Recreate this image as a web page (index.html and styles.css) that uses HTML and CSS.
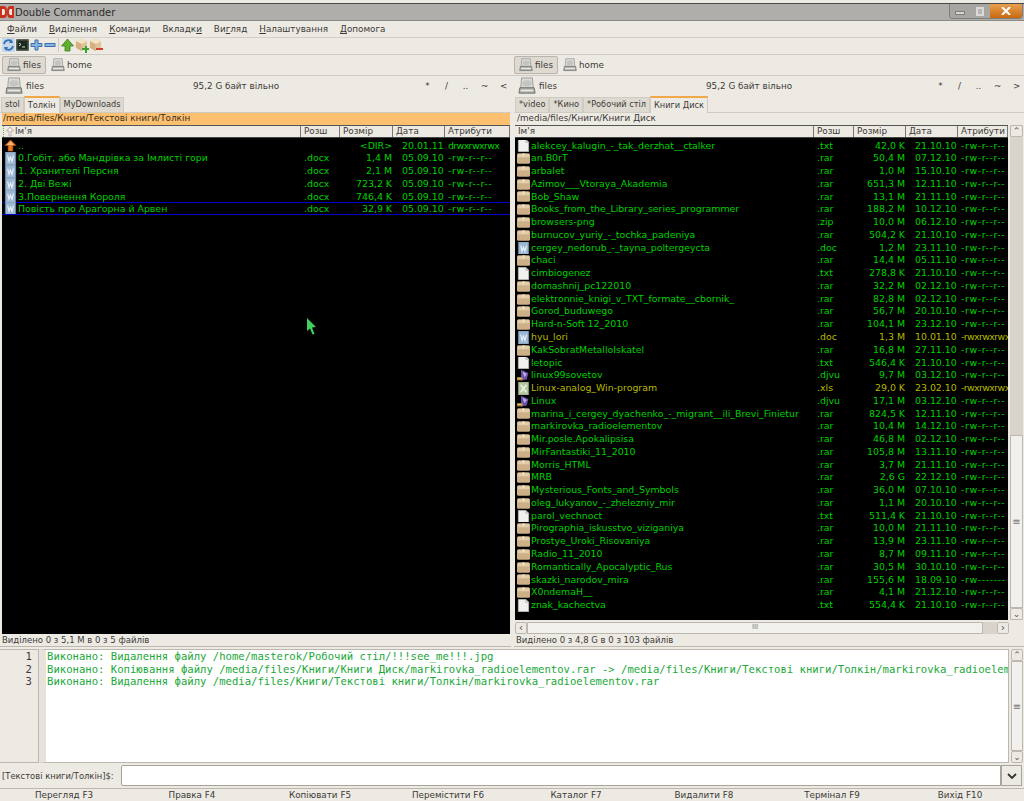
FILE: index.html

```html
<!DOCTYPE html>
<html>
<head>
    <title>Double Commander</title>
    <link rel="stylesheet" href="styles.css">
</head>
<body>
    <svg class="defs" width="0" height="0">
        <symbol id="drive" viewBox="0 0 20 20">
            <path d="M4 1h12l1 11H3z" fill="#d9d9d6" stroke="#9a9a96"/>
            <ellipse cx="10" cy="7" rx="5" ry="3.5" fill="#c4c4c0"/>
            <path d="M2 12h16l1 6H1z" fill="#a9a9a5" stroke="#70706c"/>
            <path d="M3 14h14v2H3z" fill="#e8e8e5"/>
        </symbol>
        <symbol id="box" viewBox="0 0 16 13">
            <path d="M0 2q0-2 2-2h12q2 0 2 2v9q0 2-2 2H2q-2 0-2-2z" fill="#cdb088"/>
            <path d="M1 1h14v4H1z" fill="#e2cca8"/>
            <path d="M7 0h2v4H7z" fill="#f0e4cc"/>
        </symbol>
        <symbol id="doc" viewBox="0 0 14 14">
            <path d="M1.500 0h11v14h-11z" fill="#9db8d2" stroke="#6e8cab" stroke-width=".8"/>
            <path d="M3 4l1.400 6 1.600-4.500L7.600 10 9.200 4" transform="translate(1)" fill="none" stroke="#eef4fa" stroke-width="1.200"/>
        </symbol>
        <symbol id="xls" viewBox="0 0 14 14">
            <path d="M1.500 0h11v14h-11z" fill="#b4c8a0" stroke="#84986c" stroke-width=".8"/>
            <path d="M4 3l6 8M10 3l-6 8" fill="none" stroke="#eef4e8" stroke-width="1.500"/>
        </symbol>
        <symbol id="txt" viewBox="0 0 12 14">
            <path d="M.5.500h8l3 3v10H.5z" fill="#f0f0ee" stroke="#b8b8b4"/>
            <path d="M8.500.500v3h3" fill="#d8d8d4" stroke="#b8b8b4"/>
        </symbol>
        <symbol id="djvu" viewBox="0 0 16 14">
            <path d="M5 0l9 4-2 8-7 1z" fill="#6a50a8"/>
            <path d="M7 2l5 3-3 4z" fill="#c0b0e8"/>
            <path d="M0 9h7v4H0z" fill="#b08840"/>
            <path d="M1 10h5v1H1z" fill="#e8d090"/>
        </symbol>
        <symbol id="up" viewBox="0 0 14 14">
            <path d="M7 1l6 6H9.500v6h-5V7H1z" fill="#e87820" stroke="#c05c10" stroke-width=".6"/>
            <path d="M7 2.500L3 6.500h8z" fill="#f8b880"/>
        </symbol>
        <symbol id="pack" viewBox="0 0 14 14">
            <path d="M7 0l6 3v7l-6 3.500L1 10V3z" fill="#e0c498"/>
            <path d="M7 0l6 3-6 3-6-3z" fill="#f4e4c4"/>
            <path d="M7 6v7.500L1 10V3z" fill="#d4b084"/>
        </symbol>
    </svg>

    <div class="title-bar">
        <svg class="app-logo" viewBox="0 0 14 14" width="14" height="14">
            <path d="M0 1h4q3 0 3 6t-3 6H0z" fill="#c83020"/>
            <path d="M14 1h-4q-3 0-3 6t3 6h4z" fill="#c83020"/>
            <path d="M2 4h1.500q1.500 0 1.500 3t-1.500 3H2zM12 4h-1.500Q9 4 9 7t1.500 3H12z" fill="#f4e8e0"/>
        </svg>
        <span class="title-text">Double Commander</span>
        <div class="win-btns">
            <span class="win-btn"><i class="min-mark"></i></span>
            <span class="win-btn"><i class="max-mark"></i></span>
            <span class="win-btn close"><svg viewBox="0 0 10 8" width="10" height="8"><path d="M1 0l8 8M9 0L1 8" stroke="#fff" stroke-width="2"/></svg></span>
        </div>
    </div>

    <div class="menu-bar">
        <span><u>Ф</u>айли</span>
        <span><u>В</u>иділення</span>
        <span><u>К</u>оманди</span>
        <span>Вкладк<u>и</u></span>
        <span>Ви<u>г</u>ляд</span>
        <span><u>Н</u>алаштування</span>
        <span><u>Д</u>опомога</span>
    </div>

    <div class="tool-bar">
        <svg width="13" height="14" viewBox="0 0 13 14"><rect width="13" height="14" rx="1" fill="#c4d8ee"/><path d="M2 6a4.500 4.500 0 0 1 8-2M11 8a4.500 4.500 0 0 1-8 2" fill="none" stroke="#3870b0" stroke-width="1.800"/><path d="M9 1l2 4-4 0zM4 13L2 9l4 0z" fill="#3870b0"/></svg>
        <svg width="13" height="14" viewBox="0 0 13 14"><rect y="1" width="13" height="12" rx="1" fill="#5c6458"/><rect x="1.500" y="2.500" width="10" height="9" fill="#1c2a20"/><path d="M3 5l2 1.500L3 8M6 9h3" stroke="#d0e0d0" fill="none"/></svg>
        <svg width="13" height="14" viewBox="0 0 13 14"><path d="M5 2h3v3.500h4v3H8V12H5V8.500H1v-3h4z" fill="#8ab4e0" stroke="#3c70b0"/></svg>
        <svg width="12" height="14" viewBox="0 0 12 14"><rect x="1" y="5.500" width="10" height="3" fill="#8ab4e0" stroke="#3c70b0"/></svg>
        <i class="tool-sep"></i>
        <svg width="13" height="14" viewBox="0 0 13 14"><path d="M6.500 1l6 7H9v5H4V8H.5z" fill="#60b030" stroke="#3c8018" stroke-width=".8"/></svg>
        <span class="pack-ico"><svg width="13" height="14"><use href="#pack"/></svg><b class="pack-mark add"></b></span>
        <span class="pack-ico"><svg width="13" height="14"><use href="#pack"/></svg><b class="pack-mark del"></b></span>
    </div>

    <div class="panels drive-row">
        <div class="drives">
            <span class="drive-btn active"><svg width="14" height="14"><use href="#drive"/></svg>files</span>
            <span class="drive-btn"><svg width="14" height="14"><use href="#drive"/></svg>home</span>
        </div>
        <div class="drives">
            <span class="drive-btn active"><svg width="14" height="14"><use href="#drive"/></svg>files</span>
            <span class="drive-btn"><svg width="14" height="14"><use href="#drive"/></svg>home</span>
        </div>
    </div>

    <div class="panels main-row">
        <section class="pane left-pane">
            <div class="pane-head">
                <svg width="18" height="18"><use href="#drive"/></svg>
                <span class="disk-name">files</span>
                <span class="free">95,2 G байт вільно</span>
                <span class="quick"><i>*</i><i>/</i><i>..</i><i>~</i><i>&lt;</i></span>
            </div>
            <div class="tabs">
                <span class="tab">stol</span>
                <span class="tab current">Толкін</span>
                <span class="tab">MyDownloads</span>
            </div>
            <div class="path active-path">/media/files/Книги/Текстові книги/Толкін</div>
            <div class="grid-wrap">
                <div class="table">
                    <div class="row head left-cols">
                        <span class="name sorted">Ім'я</span><span>Розш</span><span>Розмір</span><span>Дата</span><span>Атрибути</span>
                        <svg class="sort-mark" width="12" height="11" viewBox="0 0 12 11"><path d="M.5 0v11" stroke="#60b040" stroke-dasharray="1 1"/><path d="M7 1L3.500 5H6v5h2V5h2.500z" fill="#f4f2ee" stroke="#a8a49c" stroke-width=".8"/></svg>
                    </div>
                    <div class="rows">
                        <div class="row left-cols wide-attr"><span class="name"><svg><use href="#up"/></svg>..</span><span></span><span class="num">&lt;DIR&gt;</span><span>20.01.11</span><span>drwxrwxrwx</span></div>
                        <div class="row left-cols"><span class="name"><svg><use href="#doc"/></svg>0.Гобіт, або Мандрівка за Імлисті гори</span><span>.docx</span><span class="num">1,4 M</span><span>05.09.10</span><span>-rw-r--r--</span></div>
                        <div class="row left-cols"><span class="name"><svg><use href="#doc"/></svg>1. Хранителі Персня</span><span>.docx</span><span class="num">2,1 M</span><span>05.09.10</span><span>-rw-r--r--</span></div>
                        <div class="row left-cols"><span class="name"><svg><use href="#doc"/></svg>2. Дві Вежі</span><span>.docx</span><span class="num">723,2 K</span><span>05.09.10</span><span>-rw-r--r--</span></div>
                        <div class="row left-cols"><span class="name"><svg><use href="#doc"/></svg>3.Повернення Короля</span><span>.docx</span><span class="num">746,4 K</span><span>05.09.10</span><span>-rw-r--r--</span></div>
                        <div class="row left-cols cursor-row"><span class="name"><svg><use href="#doc"/></svg>Повість про Араґорна й Арвен</span><span>.docx</span><span class="num">32,9 K</span><span>05.09.10</span><span>-rw-r--r--</span></div>
                    </div>
                </div>
            </div>
            <div class="status">Виділено 0 з 5,1 M в 0 з 5 файлів</div>
        </section>

        <section class="pane right-pane">
            <div class="pane-head">
                <svg width="18" height="18"><use href="#drive"/></svg>
                <span class="disk-name">files</span>
                <span class="free">95,2 G байт вільно</span>
                <span class="quick"><i>*</i><i>/</i><i>..</i><i>~</i><i>&gt;</i></span>
            </div>
            <div class="tabs">
                <span class="tab">*video</span>
                <span class="tab">*Кино</span>
                <span class="tab">*Робочий стіл</span>
                <span class="tab current">Книги Диск</span>
            </div>
            <div class="path">/media/files/Книги/Книги Диск</div>
            <div class="grid-wrap">
                <div class="table">
                    <div class="row head right-cols"><span class="name">Ім'я</span><span>Розш</span><span>Розмір</span><span>Дата</span><span>Атрибути</span></div>
                    <div class="rows">
                        <div class="row right-cols"><span class="name"><svg><use href="#txt"/></svg>alekcey_kalugin_-_tak_derzhat__ctalker</span><span>.txt</span><span class="num">42,0 K</span><span>21.10.10</span><span>-rw-r--r--</span></div>
                        <div class="row right-cols"><span class="name"><svg><use href="#box"/></svg>an.B0rT</span><span>.rar</span><span class="num">50,4 M</span><span>07.12.10</span><span>-rw-r--r--</span></div>
                        <div class="row right-cols"><span class="name"><svg><use href="#box"/></svg>arbalet</span><span>.rar</span><span class="num">1,0 M</span><span>15.10.10</span><span>-rw-r--r--</span></div>
                        <div class="row right-cols"><span class="name"><svg><use href="#box"/></svg>Azimov___Vtoraya_Akademia</span><span>.rar</span><span class="num">651,3 M</span><span>12.11.10</span><span>-rw-r--r--</span></div>
                        <div class="row right-cols"><span class="name"><svg><use href="#box"/></svg>Bob_Shaw</span><span>.rar</span><span class="num">13,1 M</span><span>21.11.10</span><span>-rw-r--r--</span></div>
                        <div class="row right-cols"><span class="name"><svg><use href="#box"/></svg>Books_from_the_Library_series_programmer</span><span>.rar</span><span class="num">188,2 M</span><span>10.12.10</span><span>-rw-r--r--</span></div>
                        <div class="row right-cols"><span class="name"><svg><use href="#box"/></svg>browsers-png</span><span>.zip</span><span class="num">10,0 M</span><span>06.12.10</span><span>-rw-r--r--</span></div>
                        <div class="row right-cols"><span class="name"><svg><use href="#box"/></svg>burnucov_yuriy_-_tochka_padeniya</span><span>.rar</span><span class="num">504,2 K</span><span>21.10.10</span><span>-rw-r--r--</span></div>
                        <div class="row right-cols"><span class="name"><svg><use href="#doc"/></svg>cergey_nedorub_-_tayna_poltergeycta</span><span>.doc</span><span class="num">1,2 M</span><span>23.11.10</span><span>-rw-r--r--</span></div>
                        <div class="row right-cols"><span class="name"><svg><use href="#box"/></svg>chaci</span><span>.rar</span><span class="num">14,4 M</span><span>05.11.10</span><span>-rw-r--r--</span></div>
                        <div class="row right-cols"><span class="name"><svg><use href="#txt"/></svg>cimbiogenez</span><span>.txt</span><span class="num">278,8 K</span><span>21.10.10</span><span>-rw-r--r--</span></div>
                        <div class="row right-cols"><span class="name"><svg><use href="#box"/></svg>domashnij_pc122010</span><span>.rar</span><span class="num">32,2 M</span><span>02.12.10</span><span>-rw-r--r--</span></div>
                        <div class="row right-cols"><span class="name"><svg><use href="#box"/></svg>elektronnie_knigi_v_TXT_formate__cbornik_</span><span>.rar</span><span class="num">82,8 M</span><span>02.12.10</span><span>-rw-r--r--</span></div>
                        <div class="row right-cols"><span class="name"><svg><use href="#box"/></svg>Gorod_buduwego</span><span>.rar</span><span class="num">56,7 M</span><span>20.10.10</span><span>-rw-r--r--</span></div>
                        <div class="row right-cols"><span class="name"><svg><use href="#box"/></svg>Hard-n-Soft 12_2010</span><span>.rar</span><span class="num">104,1 M</span><span>23.12.10</span><span>-rw-r--r--</span></div>
                        <div class="row right-cols exec wide-attr"><span class="name"><svg><use href="#doc"/></svg>hyu_lori</span><span>.doc</span><span class="num">1,3 M</span><span>10.01.10</span><span>-rwxrwxrwx</span></div>
                        <div class="row right-cols"><span class="name"><svg><use href="#box"/></svg>KakSobratMetalloIskatel</span><span>.rar</span><span class="num">16,8 M</span><span>27.11.10</span><span>-rw-r--r--</span></div>
                        <div class="row right-cols"><span class="name"><svg><use href="#txt"/></svg>letopic</span><span>.txt</span><span class="num">546,4 K</span><span>21.10.10</span><span>-rw-r--r--</span></div>
                        <div class="row right-cols"><span class="name"><svg><use href="#djvu"/></svg>linux99sovetov</span><span>.djvu</span><span class="num">9,7 M</span><span>03.12.10</span><span>-rw-r--r--</span></div>
                        <div class="row right-cols exec wide-attr"><span class="name"><svg><use href="#xls"/></svg>Linux-analog_Win-program</span><span>.xls</span><span class="num">29,0 K</span><span>23.02.10</span><span>-rwxrwxrwx</span></div>
                        <div class="row right-cols"><span class="name"><svg><use href="#djvu"/></svg>Linux</span><span>.djvu</span><span class="num">17,1 M</span><span>03.12.10</span><span>-rw-r--r--</span></div>
                        <div class="row right-cols"><span class="name"><svg><use href="#box"/></svg>marina_i_cergey_dyachenko_-_migrant__ili_Brevi_Finietur</span><span>.rar</span><span class="num">824,5 K</span><span>12.11.10</span><span>-rw-r--r--</span></div>
                        <div class="row right-cols"><span class="name"><svg><use href="#box"/></svg>markirovka_radioelementov</span><span>.rar</span><span class="num">10,4 M</span><span>14.12.10</span><span>-rw-r--r--</span></div>
                        <div class="row right-cols"><span class="name"><svg><use href="#box"/></svg>Mir.posle.Apokalipsisa</span><span>.rar</span><span class="num">46,8 M</span><span>02.12.10</span><span>-rw-r--r--</span></div>
                        <div class="row right-cols"><span class="name"><svg><use href="#box"/></svg>MirFantastiki_11_2010</span><span>.rar</span><span class="num">105,8 M</span><span>13.11.10</span><span>-rw-r--r--</span></div>
                        <div class="row right-cols"><span class="name"><svg><use href="#box"/></svg>Morris_HTML</span><span>.rar</span><span class="num">3,7 M</span><span>21.11.10</span><span>-rw-r--r--</span></div>
                        <div class="row right-cols"><span class="name"><svg><use href="#box"/></svg>MRB</span><span>.rar</span><span class="num">2,6 G</span><span>22.12.10</span><span>-rw-r--r--</span></div>
                        <div class="row right-cols"><span class="name"><svg><use href="#box"/></svg>Mysterious_Fonts_and_Symbols</span><span>.rar</span><span class="num">36,0 M</span><span>07.10.10</span><span>-rw-r--r--</span></div>
                        <div class="row right-cols"><span class="name"><svg><use href="#box"/></svg>oleg_lukyanov_-_zhelezniy_mir</span><span>.rar</span><span class="num">1,1 M</span><span>20.10.10</span><span>-rw-r--r--</span></div>
                        <div class="row right-cols"><span class="name"><svg><use href="#txt"/></svg>parol_vechnoct</span><span>.txt</span><span class="num">511,4 K</span><span>21.10.10</span><span>-rw-r--r--</span></div>
                        <div class="row right-cols"><span class="name"><svg><use href="#box"/></svg>Pirographia_iskusstvo_viziganiya</span><span>.rar</span><span class="num">10,0 M</span><span>21.11.10</span><span>-rw-r--r--</span></div>
                        <div class="row right-cols"><span class="name"><svg><use href="#box"/></svg>Prostye_Uroki_Risovaniya</span><span>.rar</span><span class="num">13,9 M</span><span>23.11.10</span><span>-rw-r--r--</span></div>
                        <div class="row right-cols"><span class="name"><svg><use href="#box"/></svg>Radio_11_2010</span><span>.rar</span><span class="num">8,7 M</span><span>09.11.10</span><span>-rw-r--r--</span></div>
                        <div class="row right-cols"><span class="name"><svg><use href="#box"/></svg>Romantically_Apocalyptic_Rus</span><span>.rar</span><span class="num">30,5 M</span><span>30.10.10</span><span>-rw-r--r--</span></div>
                        <div class="row right-cols"><span class="name"><svg><use href="#box"/></svg>skazki_narodov_mira</span><span>.rar</span><span class="num">155,6 M</span><span>18.09.10</span><span>-rw-------</span></div>
                        <div class="row right-cols"><span class="name"><svg><use href="#box"/></svg>X0ndemaH__</span><span>.rar</span><span class="num">4,1 M</span><span>21.12.10</span><span>-rw-r--r--</span></div>
                        <div class="row right-cols"><span class="name"><svg><use href="#txt"/></svg>znak_kachectva</span><span>.txt</span><span class="num">554,4 K</span><span>21.10.10</span><span>-rw-r--r--</span></div>
                    </div>
                </div>
                <div class="vscroll">
                    <span class="sb-btn">&#8963;</span>
                    <span class="sb-track"></span>
                    <span class="sb-thumb">&#8801;</span>
                    <span class="sb-btn">&#8964;</span>
                </div>
            </div>
            <div class="hscroll">
                <span class="sb-btn side">&#8249;</span>
                <span class="hthumb">III</span>
                <span class="sb-btn side">&#8250;</span>
            </div>
            <div class="status">Виділено 0 з 4,8 G в 0 з 103 файлів</div>
        </section>
    </div>

    <div class="log-box">
        <div class="gutter"><span>1</span><span>2</span><span>3</span></div>
        <div class="log-text">
            <div>Виконано: Видалення файлу /home/masterok/Робочий стіл/!!!see_me!!!.jpg</div>
            <div>Виконано: Копіювання файлу /media/files/Книги/Книги Диск/markirovka_radioelementov.rar -&gt; /media/files/Книги/Текстові книги/Толкін/markirovka_radioelementov.rar</div>
            <div>Виконано: Видалення файлу /media/files/Книги/Текстові книги/Толкін/markirovka_radioelementov.rar</div>
        </div>
        <div class="vscroll log-scroll">
            <span class="sb-btn">&#8963;</span>
            <span class="sb-thumb">&#8801;</span>
            <span class="sb-btn">&#8964;</span>
        </div>
    </div>

    <div class="cmd-row">
        <label>[Текстові книги/Толкін]$:</label>
        <div class="cmd-input"></div>
        <span class="cmd-drop"><svg width="10" height="6" viewBox="0 0 10 6"><path d="M1 1l4 4 4-4" fill="none" stroke="#333" stroke-width="1.800"/></svg></span>
    </div>

    <div class="fkeys">
        <span>Перегляд F3</span>
        <span>Правка F4</span>
        <span>Копіювати F5</span>
        <span>Перемістити F6</span>
        <span>Каталог F7</span>
        <span>Видалити F8</span>
        <span>Термінал F9</span>
        <span>Вихід F10</span>
    </div>

    <svg class="mouse" width="11" height="17" viewBox="0 0 11 17"><path d="M1 0l9 9-4 .5L8.500 16 6.500 16.500 4 10.500 1 13z" fill="#40d060"/></svg>
</body>
</html>
```

FILE: styles.css

```css
* {
    box-sizing: border-box;
}

html, body {
    margin: 0;
    height: 801px;
    overflow: hidden;
}

body {
    position: relative;
    display: flex;
    flex-direction: column;
    background: #edeae4;
    color: #3c3a36;
    font-family: "DejaVu Sans", sans-serif;
    font-size: 8.8px;
    padding-top: 3px;
}

.defs {
    position: absolute;
}

/* window frame */
.title-bar {
    flex: none;
    height: 18px;
    display: flex;
    align-items: center;
    gap: 1px;
    background: #b0aeaa;
    border-top: 1px solid #4c4a48;
    border-bottom: 1px solid #8c8a86;
    color: #2c2c2c;
    font-size: 10px;
}

.win-btns {
    margin-left: auto;
    margin-right: 1px;
    display: flex;
    height: 15px;
    align-self: flex-start;
    border: 1px solid #807e7a;
    border-top: 0;
    border-radius: 0 0 4px 4px;
    overflow: hidden;
}

.win-btn {
    width: 20px;
    display: flex;
    align-items: center;
    justify-content: center;
    background: #a8a6a2;
}

.win-btn.close {
    width: 32px;
    background: linear-gradient(#e8a050, #c86810);
}

.min-mark {
    width: 10px;
    height: 4px;
    background: #d8d6d2;
    border: 1px solid #807e7a;
    margin-top: 3px;
}

.max-mark {
    width: 8px;
    height: 9px;
    background: #b8b6b2;
    border: 2px solid #dcdad6;
}

.menu-bar {
    flex: none;
    height: 17px;
    display: flex;
    align-items: center;
    gap: 12px;
    padding-left: 7px;
    border-bottom: 1px solid #d4d0c8;
}

.tool-bar {
    flex: none;
    height: 17px;
    display: flex;
    align-items: center;
    gap: 1px;
    padding: 0 0 2px 2px;
    border-bottom: 1px solid #cfcbc3;
}

.tool-sep {
    width: 1px;
    height: 14px;
    background: #d0ccc4;
    margin: 0 1px;
}

.pack-ico {
    position: relative;
    display: flex;
}

.pack-mark {
    position: absolute;
    right: -1px;
    bottom: 2px;
    width: 7px;
    height: 2px;
}

.pack-mark.add {
    background: #40a030;
}

.pack-mark.add::after {
    content: "";
    position: absolute;
    left: 2.500px;
    top: -2.500px;
    width: 2px;
    height: 7px;
    background: #40a030;
}

.pack-mark.del {
    background: #d04030;
}

/* drives and panes */
.panels {
    flex: none;
    display: grid;
    grid-template-columns: 511px 1fr;
    column-gap: 3px;
}

.drive-row {
    height: 21px;
    border-bottom: 1px solid #cfcbc3;
}

.drives {
    display: flex;
    align-items: center;
    padding-left: 0;
}

.drives:first-child {
    padding-left: 2px;
}

.drive-btn {
    display: flex;
    align-items: center;
    gap: 2px;
    height: 18px;
    padding: 0 4px;
    border: 1px solid transparent;
}

.drive-btn.active {
    background: #dedad2;
    border-color: #b8b4ac;
    border-radius: 2px;
}

.main-row {
    height: 570px;
}

.pane {
    display: flex;
    flex-direction: column;
    min-width: 0;
}

.pane-head {
    flex: none;
    height: 20px;
    display: flex;
    align-items: center;
    padding-left: 5px;
}

.right-pane .pane-head {
    padding-left: 4px;
}

.disk-name {
    margin-left: 3px;
    width: 167px;
}

.free {
    width: 231px;
}

.quick {
    display: flex;
    gap: 12px;
}

.quick i {
    font-style: normal;
    width: 7px;
    text-align: center;
}

.tabs {
    flex: none;
    height: 17px;
    display: flex;
    align-items: flex-end;
    padding-left: 1px;
    border-bottom: 1px solid #cfcbc3;
    font-size: 8.200px;
}

.tab {
    height: 15px;
    padding: 1px 3px 0;
    background: #dedad2;
    border: 1px solid #cfcbc3;
    border-bottom: 0;
}

.tab.current {
    height: 17px;
    padding-top: 2px;
    background: #edeae4;
    border-top: 2px solid #f0a848;
    margin-bottom: -1px;
}

.path {
    flex: none;
    height: 12px;
    line-height: 11px;
    padding-left: 3px;
}

.active-path {
    background: #fcc070;
    color: #3a3020;
    margin: 0 1px 0 2px;
    padding-left: 1px;
}

.grid-wrap {
    flex: 1;
    min-height: 0;
    display: flex;
    gap: 2px;
}

.left-pane .grid-wrap {
    padding: 0 1px 0 2px;
}

.right-pane .grid-wrap {
    padding-left: 1px;
}

.table {
    flex: 1;
    min-width: 0;
    display: flex;
    flex-direction: column;
    background: #000;
}

.row {
    display: grid;
    height: 12.780px;
    line-height: 12.780px;
    font-size: 9.400px;
    color: #00d000;
    white-space: nowrap;
}

.left-cols {
    grid-template-columns: 299px 39px 53px 52px 1fr;
}

.right-cols {
    grid-template-columns: 299px 40px 52px 52px 1fr;
}

.row span {
    overflow: hidden;
    padding-left: 3px;
}

.row .num {
    text-align: right;
    padding-right: 1px;
}

.row .name {
    display: flex;
    align-items: center;
    gap: 1px;
    padding-left: 2px;
}

.rows .row span:nth-child(4) {
    padding-left: 9px;
}

.rows .row span:last-child {
    letter-spacing: .6px;
}

.rows .row.wide-attr span:last-child {
    letter-spacing: -.6px;
}

.row svg {
    flex: none;
    width: 13px;
    height: 13px;
}

.row.exec {
    color: #b8b800;
}

.cursor-row {
    height: 13px;
    margin-top: -1px;
    border-top: 1px solid #0000d0;
    border-bottom: 1px solid #0000d0;
    line-height: 11px;
}

.rows {
    flex: 1;
    padding-top: 1.500px;
}

.row.head {
    position: relative;
    flex: none;
    height: 13px;
    line-height: 11px;
    font-size: 8.800px;
    color: #3c3a36;
    background: #edeae4;
    border-top: 1px solid #555;
    border-bottom: 1px solid #444;
}

.row.head span {
    border-right: 1px solid #777;
    padding-left: 3px;
}

.row.head .name {
    display: block;
}

.row.head .sorted {
    padding-left: 13px;
}

.row.head .sort-mark {
    position: absolute;
    left: 1px;
    top: 0;
    width: 12px;
    height: 11px;
}

.vscroll {
    flex: none;
    width: 13px;
    height: 495px;
    display: flex;
    flex-direction: column;
    background: #d8d4cc;
    margin-right: 1px;
}

.sb-btn {
    flex: none;
    height: 12px;
    display: flex;
    align-items: center;
    justify-content: center;
    background: #edeae4;
    border: 1px solid #bcb8b0;
    border-radius: 2px;
    font-size: 9px;
    line-height: 10px;
    color: #555;
}

.sb-track {
    height: 298px;
    flex: none;
}

.sb-thumb {
    flex: 1;
    display: flex;
    align-items: center;
    justify-content: center;
    background: #f2f0ec;
    border: 1px solid #bcb8b0;
    font-size: 10px;
    color: #777;
}

.hscroll {
    flex: none;
    height: 13px;
    display: flex;
    padding: 1px 15px 0 1px;
    margin-top: 1px;
    background: #edeae4;
}

.hthumb {
    flex: 1;
    margin-right: 14px;
    background: #f2f0ec;
    box-shadow: 14px 0 0 #d8d4cc;
    border: 1px solid #bcb8b0;
    text-align: center;
    font-size: 7px;
    line-height: 9px;
    color: #777;
}

.sb-btn.side {
    width: 12px;
    height: 12px;
    font-size: 11px;
}

.status {
    flex: none;
    height: 13px;
    line-height: 12px;
    font-size: 8.500px;
    padding-left: 2px;
    border-bottom: 1px solid #bcb8b0;
}

/* log */
.log-box {
    flex: none;
    height: 114px;
    display: flex;
    margin-top: 3px;
}

.gutter {
    flex: none;
    width: 39px;
    padding-right: 6px;
    display: flex;
    flex-direction: column;
    align-items: flex-end;
    background: #edeae4;
    border: 1px solid #bcb8b0;
    border-left: 0;
    font-family: "DejaVu Sans Mono", monospace;
    font-size: 10.600px;
    line-height: 12.500px;
}

.log-text {
    flex: 1;
    min-width: 0;
    overflow: hidden;
    padding-left: 1px;
    background: #fff;
    border: 1px solid #bcb8b0;
    border-left: 7px solid #e6e3dd;
    font-family: "DejaVu Sans Mono", monospace;
    font-size: 10.600px;
    line-height: 12.500px;
    white-space: nowrap;
    color: #20a838;
}

.log-scroll {
    width: 12px;
    height: auto;
    margin: 0 1px 0 2px;
    background: #edeae4;
}

.cmd-row {
    flex: none;
    height: 25px;
    display: flex;
    align-items: center;
    padding-left: 2px;
}

.cmd-row label {
    width: 119px;
    font-size: 8.400px;
    white-space: nowrap;
}

.cmd-input {
    flex: 1;
    height: 21px;
    background: #fff;
    border: 1px solid #a8a49c;
    border-radius: 2px 0 0 2px;
}

.cmd-drop {
    width: 21px;
    height: 21px;
    margin-right: 2px;
    display: flex;
    align-items: center;
    justify-content: center;
    background: #edeae4;
    border: 1px solid #a8a49c;
}

.fkeys {
    flex: 1;
    display: grid;
    grid-template-columns: repeat(8, 1fr);
    text-align: center;
    align-items: center;
    border-top: 1px solid #bcb8b0;
}

.mouse {
    position: absolute;
    left: 306px;
    top: 318px;
}
```
